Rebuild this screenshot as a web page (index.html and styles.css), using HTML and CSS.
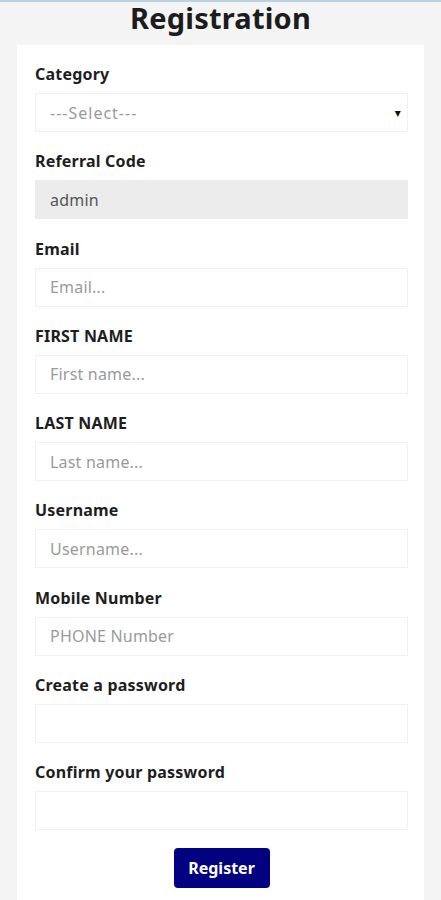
FILE: index.html
```html
<!DOCTYPE html>
<html lang="en">
<head>
<meta charset="utf-8">
<title>Registration</title>
<link rel="stylesheet" href="styles.css">
</head>
<body>
<div class="topline"></div>
<h1 class="title">Registration</h1>
<form class="card">
  <div class="field">
    <label class="label">Category</label>
    <div class="input select"><span class="ph dashes">---Select---</span><span class="arrow">▾</span></div>
  </div>
  <div class="field">
    <label class="label">Referral Code</label>
    <div class="input readonly"><span class="val">admin</span></div>
  </div>
  <div class="field">
    <label class="label">Email</label>
    <div class="input"><span class="ph">Email...</span></div>
  </div>
  <div class="field">
    <label class="label">FIRST NAME</label>
    <div class="input"><span class="ph">First name...</span></div>
  </div>
  <div class="field">
    <label class="label">LAST NAME</label>
    <div class="input"><span class="ph">Last name...</span></div>
  </div>
  <div class="field">
    <label class="label">Username</label>
    <div class="input"><span class="ph">Username...</span></div>
  </div>
  <div class="field">
    <label class="label">Mobile Number</label>
    <div class="input"><span class="ph">PHONE Number</span></div>
  </div>
  <div class="field">
    <label class="label">Create a password</label>
    <div class="input"></div>
  </div>
  <div class="field">
    <label class="label">Confirm your password</label>
    <div class="input"></div>
  </div>
  <div class="actions">
    <button type="button" class="btn">Register</button>
  </div>
</form>
</body>
</html>
```
FILE: styles.css
```css
* { box-sizing: border-box; }
html, body { margin: 0; padding: 0; }
body {
  background: #f4f4f4;
  font-family: "Noto Sans", "DejaVu Sans", sans-serif;
  color: #1a1a1a;
  height: 900px;
  overflow: hidden;
}
.topline {
  height: 2px;
  background: #b7d3e2;
}
.title {
  margin: 0;
  height: 43px;
  text-align: center;
  font-size: 29px;
  line-height: 32px;
  font-weight: 700;
  letter-spacing: 0.2px;
  color: #1c1c1c;
}
.card {
  margin: 0 17px 0 17px;
  background: #fff;
  padding: 19px 16px 20px 18px;
  display: flex;
  flex-direction: column;
  gap: 19.3px;
}
.field {
  display: flex;
  flex-direction: column;
  gap: 8px;
}
.label {
  font-size: 16px;
  line-height: 21px;
  font-weight: 700;
  letter-spacing: 0.2px;
  color: #1e1e1e;
}
.input {
  height: 39px;
  border: 1px solid #f1f1f1;
  background: #fff;
  display: flex;
  align-items: center;
  padding: 0 14px;
  font-size: 16px;
  letter-spacing: 0.2px;
}
.input.readonly { background: #ececec; border-color: #ececec; }
.ph { color: #9a9a9a; }
.dashes { letter-spacing: 1px; }
.val { color: #555; }
.select { justify-content: space-between; padding-right: 6px; }
.arrow { font-size: 12px; color: #111; }
.actions {
  display: flex;
  justify-content: center;
  margin-top: -2px;
}
.btn {
  width: 96px;
  height: 40px;
  background: #020280;
  color: #fff;
  border: none;
  border-radius: 4px;
  font-family: "Noto Sans", "DejaVu Sans", sans-serif;
  font-weight: 700;
  font-size: 16px;
}
```
